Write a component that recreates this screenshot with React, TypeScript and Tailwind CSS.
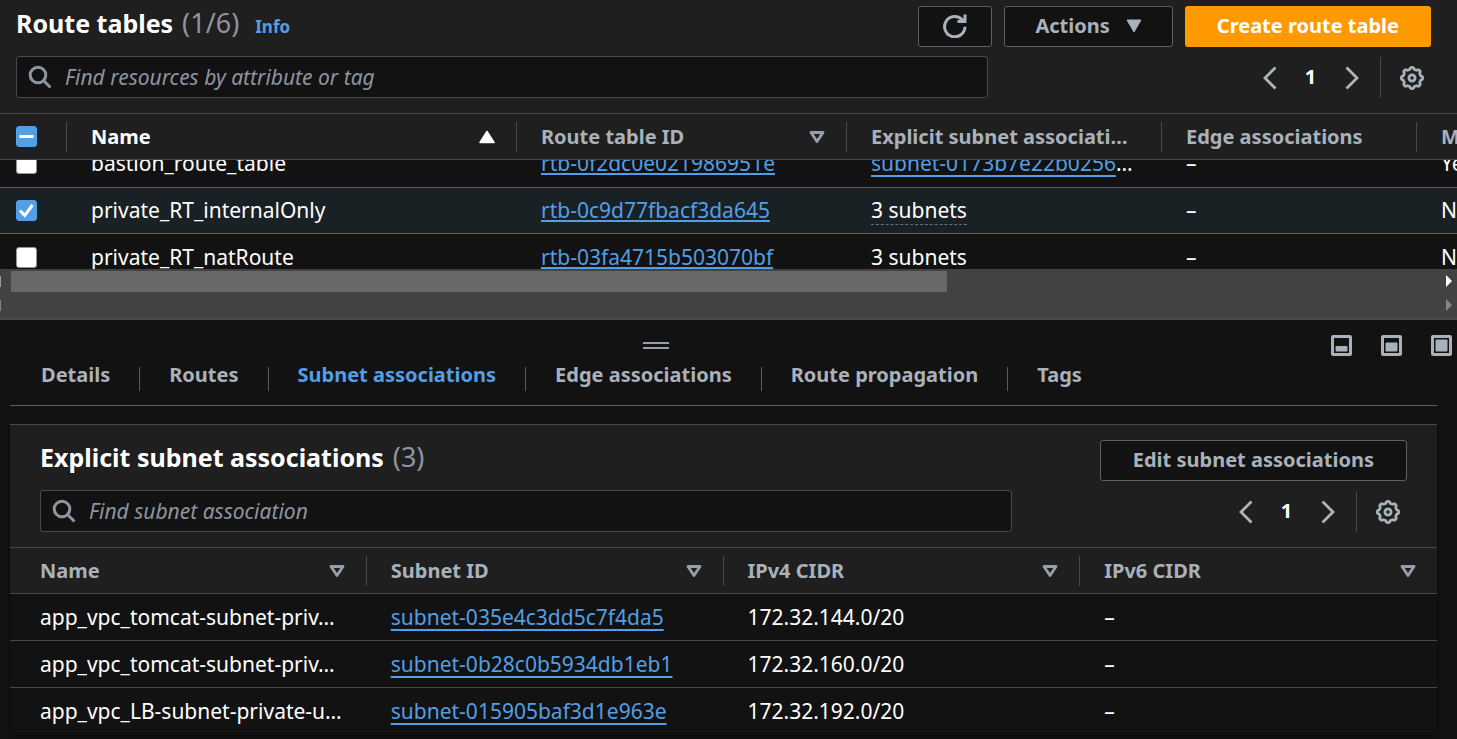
import { useLayoutEffect, useRef } from "react";
import type { ReactNode } from "react";

const cog = (() => {
  const points: string[] = [];
  for (let i = 0; i < 72; i++) {
    const angle = (i / 72) * Math.PI * 2 - Math.PI / 2;
    const wave = Math.max(-0.9, Math.min(0.9, Math.cos((i / 72) * Math.PI * 16) * 1.6));
    const radius = 9.7 + wave;
    points.push((12 + radius * Math.cos(angle)).toFixed(2) + " " + (12 + radius * Math.sin(angle)).toFixed(2));
  }
  return "M" + points.join("L") + "Z";
})();

function GearIcon() {
  return (
    <svg viewBox="0 0 24 24" className="size-6" fill="none" stroke="#a9b1bb" strokeWidth="2.8" strokeLinejoin="round" aria-hidden="true">
      <path d={cog} />
      <circle cx="12" cy="12" r="3.1" />
    </svg>
  );
}

function SearchIcon() {
  return (
    <svg viewBox="0 0 24 24" className="size-6 shrink-0" fill="none" stroke="#8d95a0" strokeWidth="3" aria-hidden="true">
      <circle cx="10" cy="10" r="7.8" />
      <path d="M15.5 15.5L22.5 22.5" />
    </svg>
  );
}

function RefreshIcon() {
  return (
    <svg viewBox="0 0 24 24" className="size-6 shrink-0" fill="none" stroke="#a9b1bb" strokeWidth="3" aria-hidden="true">
      <path d="M22 12.8A10.2 10.2 0 1 1 19 5.4L21.5 7.5" />
      <path d="M22 0.5V7.5H14.5" />
    </svg>
  );
}

function Chevron({ next = false }: { next?: boolean }) {
  return (
    <svg viewBox="0 0 14 24" className="h-6 w-[14px]" fill="none" stroke="#aab7b8" strokeWidth="2.8" aria-hidden="true">
      <path d={next ? "M1.5 1.5L12 12L1.5 22.5" : "M12.5 1.5L2 12L12.5 22.5"} />
    </svg>
  );
}

function SortIcon({ ascending = false }: { ascending?: boolean }) {
  return ascending ? (
    <svg viewBox="0 0 16 14" className="h-[14px] w-4 shrink-0" fill="#ffffff" stroke="#ffffff" strokeWidth="1.5" strokeLinejoin="round" aria-hidden="true">
      <path d="M8 1.5L15 12.5H1Z" />
    </svg>
  ) : (
    <svg viewBox="0 0 16 14" className="h-[14px] w-4 shrink-0" fill="none" stroke="#95a0ab" strokeWidth="2.8" strokeLinejoin="round" aria-hidden="true">
      <path d="M2 2.5H14L8 11.5Z" />
    </svg>
  );
}

function PanelIcon({ top }: { top: number }) {
  return (
    <svg viewBox="0 0 21 21" className="size-[21px]" aria-hidden="true">
      <rect x="1.5" y="1.5" width="18" height="18" rx="0.5" fill="none" stroke="#a9b1bb" strokeWidth="3" />
      <rect x="4.5" y={top} width="12" height={16.5 - top} rx="1" fill="#a9b1bb" />
    </svg>
  );
}

function Pager() {
  return (
    <nav aria-label="Pagination" className="flex h-[41px] items-center self-end">
      <button type="button" aria-label="Previous page" className="flex w-[41px] justify-center">
        <Chevron />
      </button>
      <button type="button" aria-current="page" className="w-[41px] pb-0.5 text-center text-xl leading-6 font-bold text-white">
        1
      </button>
      <button type="button" aria-label="Next page" className="flex w-[41px] justify-center">
        <Chevron next />
      </button>
      <span className="ml-2 h-full border-l border-[#45484d]" />
      <button type="button" aria-label="Preferences" className="mr-[7px] ml-[19px]">
        <GearIcon />
      </button>
    </nav>
  );
}

function SearchBar({ label }: { label: string }) {
  return (
    <div className="flex items-center justify-between">
      <label className="flex h-[42px] max-w-[972px] flex-1 items-center gap-[13px] rounded-[3px] border border-[#474a50] bg-[#121212] pl-[11px]">
        <SearchIcon />
        <input
          type="text"
          aria-label={label}
          placeholder={label}
          className="min-w-0 flex-1 bg-transparent text-[21px] leading-7 text-white italic outline-none placeholder:text-[#8d95a0]"
        />
      </label>
      <Pager />
    </div>
  );
}

const outlineButton =
  "flex h-[41px] items-center rounded-[3px] border border-[#5c5f66] bg-[#121212] pb-0.5 text-xl font-bold text-[#a9b1bb]";

function Checkbox({ label, checked = false, mixed = false }: { label: string; checked?: boolean; mixed?: boolean }) {
  return (
    <label className="relative flex size-[21px]">
      <input
        type="checkbox"
        aria-label={label}
        defaultChecked={checked}
        className="size-[21px] appearance-none rounded-[3px] border border-[#8d95a0] bg-white checked:border-[#539fe5] checked:bg-[#539fe5]"
      />
      {checked && (
        <svg viewBox="0 0 21 21" className="pointer-events-none absolute inset-0 size-[21px]" fill="none" stroke="#ffffff" strokeWidth="3" aria-hidden="true">
          <path d={mixed ? "M3.5 10.5H17.5" : "M4 10.5L8.8 15.5L16.5 5"} />
        </svg>
      )}
    </label>
  );
}

function HeadCell({ children, sort, active = false, divider = true }: { children: ReactNode; sort?: "none" | "ascending"; active?: boolean; divider?: boolean }) {
  return (
    <th scope="col" className="h-[47px] border-y border-[#45484d] bg-[#1f1f1f] p-0 text-left">
      <div className={"flex h-[30px] items-center justify-between gap-2 pr-[21px] " + (divider ? "border-r border-[#45484d]" : "")}>
        <span className={"text-xl leading-7 font-bold whitespace-nowrap " + (active ? "text-white" : "text-[#a9b1bb]")}>{children}</span>
        {sort && <SortIcon ascending={sort === "ascending"} />}
      </div>
    </th>
  );
}

const link = "text-[#539fe5] underline decoration-2 [text-decoration-skip-ink:none]";

type Route = { name: string; id: string; subnets: ReactNode; main: string; selected?: boolean };

const routes: Route[] = [
  {
    name: "bastion_route_table",
    id: "rtb-0f2dc0e021986951e",
    subnets: (
      <>
        <a href="#subnet" className={link + " underline-offset-4"}>subnet-0173b7e22b0256</a>…
      </>
    ),
    main: "Yes",
  },
  {
    name: "private_RT_internalOnly",
    id: "rtb-0c9d77fbacf3da645",
    subnets: <span className="border-b border-dashed border-[#687078]">3 subnets</span>,
    main: "No",
    selected: true,
  },
  { name: "private_RT_natRoute", id: "rtb-03fa4715b503070bf", subnets: "3 subnets", main: "No" },
];

function RouteTable() {
  const scroller = useRef<HTMLDivElement>(null);
  useLayoutEffect(() => {
    if (scroller.current) scroller.current.scrollTop = 20;
  }, []);
  return (
    <div ref={scroller} className="h-[156px] overflow-hidden bg-[#121212]">
      <table className="w-full min-w-[1640px] table-fixed border-separate border-spacing-0 text-[21px] leading-7 text-white">
        <colgroup>
          <col className="w-[67px]" />
          <col className="w-[450px]" />
          <col className="w-[330px]" />
          <col className="w-[315px]" />
          <col className="w-[255px]" />
          <col />
        </colgroup>
        <thead className="sticky top-0 z-10">
          <tr className="[&_th]:pl-6 [&_th:first-child]:pl-4">
            <HeadCell>
              <Checkbox label="Select all route tables" checked mixed />
            </HeadCell>
            <HeadCell sort="ascending" active>Name</HeadCell>
            <HeadCell sort="none">Route table ID</HeadCell>
            <HeadCell>Explicit subnet associati…</HeadCell>
            <HeadCell>Edge associations</HeadCell>
            <HeadCell>Main</HeadCell>
          </tr>
        </thead>
        <tbody>
          {routes.map((r) => (
            <tr
              key={r.id}
              className={
                "h-[47px] whitespace-nowrap [&>td]:p-0 [&>td]:pb-0.5 [&>td]:pl-6 [&>td:first-child]:pb-0 [&>td:first-child]:pl-4 " +
                (r.selected ? "bg-[#1a2125] [&>td]:border-y [&>td]:border-[#33699a]" : "")
              }
            >
              <td>
                <Checkbox label={r.name} checked={r.selected} />
              </td>
              <td>{r.name}</td>
              <td>
                <a href="#route-table" className={link + " underline-offset-2"}>{r.id}</a>
              </td>
              <td>{r.subnets}</td>
              <td>–</td>
              <td>{r.main}</td>
            </tr>
          ))}
        </tbody>
      </table>
    </div>
  );
}

function ScrollTrack({ active = false }: { active?: boolean }) {
  return (
    <div className="flex h-6 items-center gap-[10px]">
      <span className={"h-[11px] w-px " + (active ? "bg-[#9a9a9a]" : "bg-[#858585]")} />
      <div className="h-[21px] flex-1">{active && <div className="h-full w-[65.7%] bg-[#686868]" />}</div>
      <svg viewBox="0 0 6 12" className={"mr-[5px] h-3 w-[6px] " + (active ? "text-white" : "text-[#858585]")} fill="currentColor" aria-hidden="true">
        <path d="M0 0L6 6L0 12Z" />
      </svg>
    </div>
  );
}

const tabs = ["Details", "Routes", "Subnet associations", "Edge associations", "Route propagation", "Tags"];

const subnets = [
  { name: "app_vpc_tomcat-subnet-priv…", id: "subnet-035e4c3dd5c7f4da5", cidr: "172.32.144.0/20" },
  { name: "app_vpc_tomcat-subnet-priv…", id: "subnet-0b28c0b5934db1eb1", cidr: "172.32.160.0/20" },
  { name: "app_vpc_LB-subnet-private-u…", id: "subnet-015905baf3d1e963e", cidr: "172.32.192.0/20" },
];

export default function App() {
  return (
    <div className="min-h-screen overflow-hidden bg-[#121212] font-['Noto_Sans','Open_Sans',sans-serif] text-white">
      <section className="bg-[#1f1f1f]">
        <div className="flex flex-col gap-[9px] pt-[6px] pr-[26px] pb-[15px] pl-4">
          <header className="flex items-start justify-between">
            <h1 className="flex items-baseline text-[25px] leading-[34px] font-bold">
              Route tables
              <span className="ml-[9px] text-[27px] font-normal text-[#8d95a0]">(1/6)</span>
              <a href="#info" className="ml-4 text-[17px] font-bold text-[#539fe5]">Info</a>
            </h1>
            <div className="flex gap-3">
              <button type="button" aria-label="Refresh" className={outlineButton + " w-[74px] justify-center"}>
                <RefreshIcon />
              </button>
              <button type="button" className={outlineButton + " gap-4 px-[30px]"}>
                Actions
                <svg viewBox="0 0 16 14" className="h-[14px] w-4" fill="#a9b1bb" stroke="#a9b1bb" strokeLinejoin="round" aria-hidden="true">
                  <path d="M1 1H15L8 13Z" />
                </svg>
              </button>
              <button type="button" className="h-[41px] rounded-[3px] bg-[#ff9900] px-8 pb-0.5 text-xl font-bold text-white">
                Create route table
              </button>
            </div>
          </header>
          <SearchBar label="Find resources by attribute or tag" />
        </div>
        <RouteTable />
        <div className="border-b-2 border-[#464b51] bg-[#424242] pb-px">
          <ScrollTrack active />
          <ScrollTrack />
        </div>
      </section>

      <section className="pr-5 pl-[10px]">
        <div className="-mr-[15px] flex items-start gap-[30px] pt-[15px]">
          <div className="flex flex-1 justify-center pt-[7px]">
            <div className="flex w-[26px] flex-col gap-[3px]">
              <span className="h-[2px] bg-[#95a0ab]" />
              <span className="h-[2px] bg-[#95a0ab]" />
            </div>
          </div>
          <div className="flex gap-[29px]">
            <button type="button" aria-label="Small panel"><PanelIcon top={11} /></button>
            <button type="button" aria-label="Medium panel"><PanelIcon top={7.5} /></button>
            <button type="button" aria-label="Full panel"><PanelIcon top={4.5} /></button>
          </div>
        </div>

        <div role="tablist" className="flex border-b border-[#5a6062] pt-[11px] pb-[14px] pl-0.5">
          {tabs.map((tab) => (
            <button
              key={tab}
              type="button"
              role="tab"
              aria-selected={tab === "Subnet associations"}
              className="flex h-6 items-center border-r border-[#545b64] px-[29px] pb-2 text-xl font-bold text-[#a9b1bb] last:border-r-0 aria-selected:text-[#539fe5]"
            >
              {tab}
            </button>
          ))}
        </div>

        <div className="mt-[18px] border-t border-[#45484d] bg-[#1f1f1f] shadow-[0_1px_3px_rgba(0,0,0,0.6)]">
          <div className="flex flex-col gap-[9px] px-[30px] pt-[15px] pb-[15px]">
            <header className="flex items-start justify-between">
              <h2 className="flex items-baseline text-[25px] leading-[34px] font-bold">
                Explicit subnet associations
                <span className="ml-[9px] text-[27px] font-normal text-[#8d95a0]">(3)</span>
              </h2>
              <button type="button" className={outlineButton + " px-8"}>Edit subnet associations</button>
            </header>
            <SearchBar label="Find subnet association" />
          </div>
          <table className="w-full table-fixed border-separate border-spacing-0 bg-[#121212] text-[21px] leading-7">
            <thead>
              <tr className="[&_th]:pl-6 [&_th:first-child]:pl-[30px]">
                <HeadCell sort="none">Name</HeadCell>
                <HeadCell sort="none">Subnet ID</HeadCell>
                <HeadCell sort="none">IPv4 CIDR</HeadCell>
                <HeadCell sort="none" divider={false}>IPv6 CIDR</HeadCell>
              </tr>
            </thead>
            <tbody>
              {subnets.map((s) => (
                <tr
                  key={s.id}
                  className="h-[47px] whitespace-nowrap [&>td]:border-b [&>td]:border-[#45484d] [&>td]:p-0 [&>td]:pl-6 [&>td:first-child]:pl-[30px] [&:last-child>td]:border-transparent"
                >
                  <td>{s.name}</td>
                  <td>
                    <a href="#subnet" className={link + " underline-offset-4"}>{s.id}</a>
                  </td>
                  <td>{s.cidr}</td>
                  <td>–</td>
                </tr>
              ))}
            </tbody>
          </table>
        </div>
      </section>
    </div>
  );
}
